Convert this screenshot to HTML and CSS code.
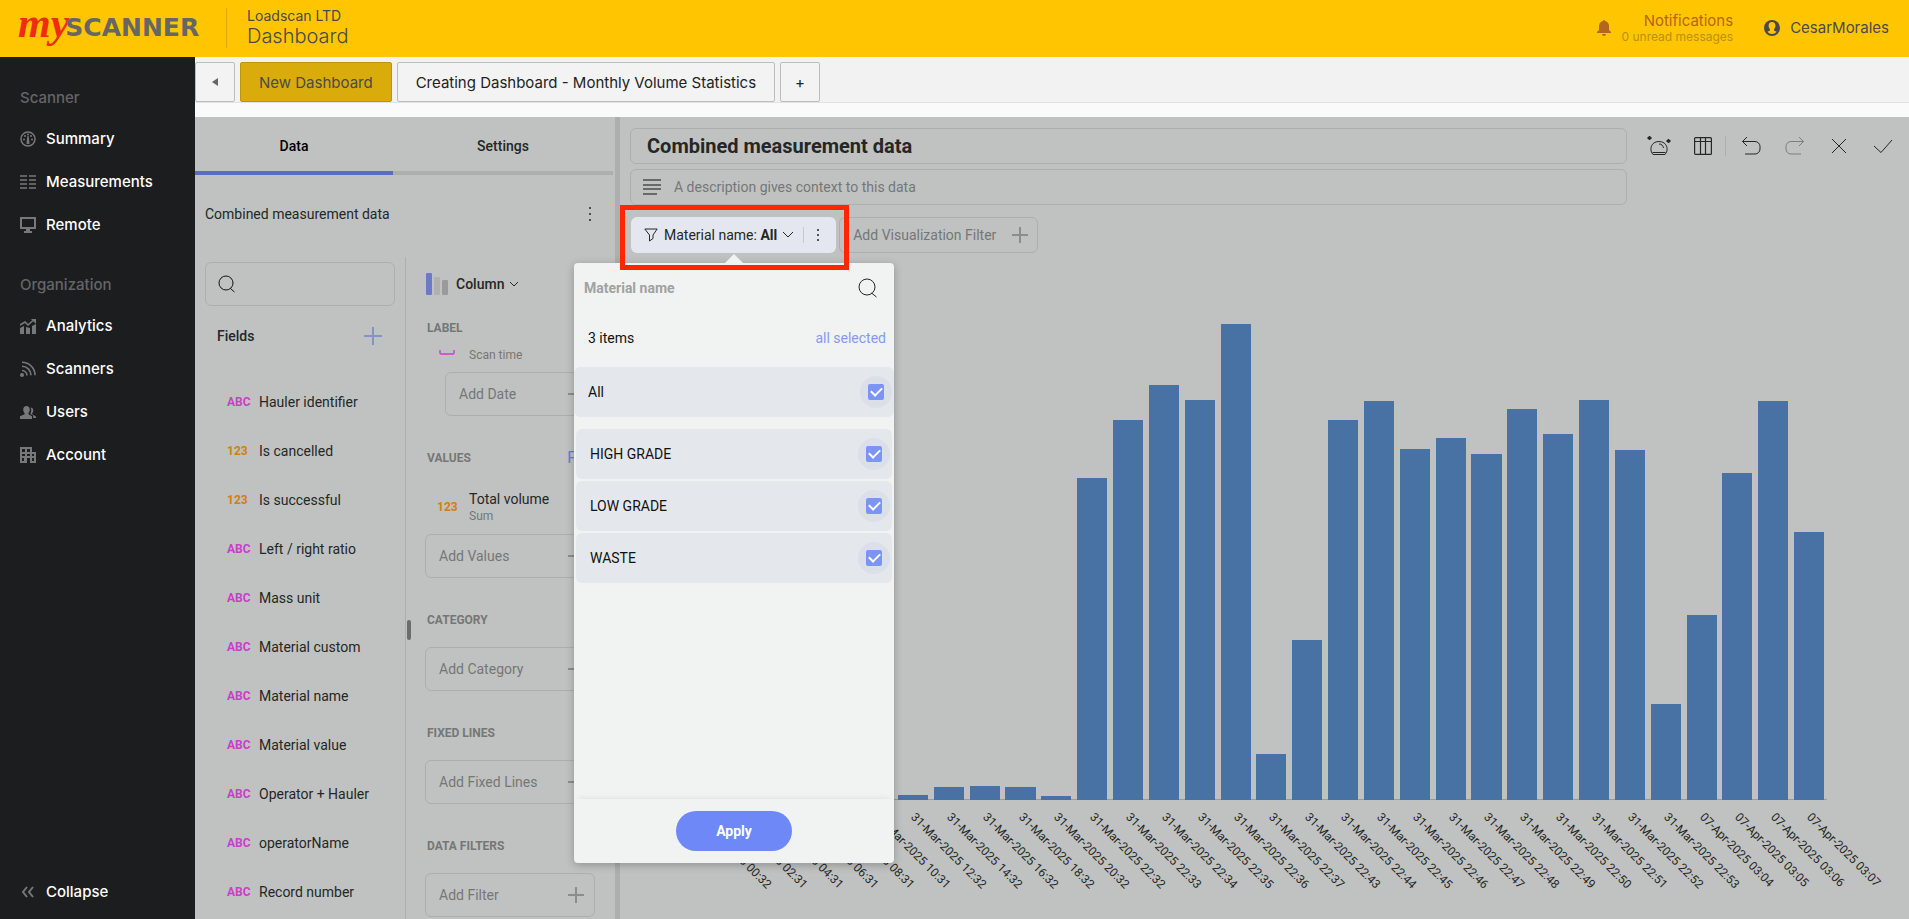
FILE: index.html
```html
<!DOCTYPE html>
<html lang="en">
<head>
    <meta charset="UTF-8">
    <meta name="viewport" content="width=device-width, initial-scale=1.0">
    <title>Loadscan LTD - Dashboard</title>
    <link rel="stylesheet" href="styles.css">
</head>
<body>
    <header class="topbar">
        <div class="logo"><span class="logo-my">my</span><span class="logo-scanner">SCANNER</span></div>
        <div class="page-name">
            <span class="company">Loadscan LTD</span>
            <h1>Dashboard</h1>
        </div>
        <a class="notifications" href="#">
            <svg width="14" height="16" viewBox="0 0 14 16" fill="currentColor"><path d="M7 0a1 1 0 0 1 1 1C11 1.500 12 4 12 6v4l2 2v1H0v-1l2-2V6c0-2 1-4.500 4-5a1 1 0 0 1 1-1zM5 14h4a2 2 0 0 1-4 0z"/></svg>
            <span class="notifications-text">
                <span>Notifications</span>
                <small>0 unread messages</small>
            </span>
        </a>
        <a class="user" href="#">
            <svg width="16" height="16" viewBox="0 0 16 16"><circle cx="8" cy="8" r="8" fill="#4a4a4a"/><path d="M8 2c2.200 0 3.400 1.500 3.400 3.600 0 1.600-.7 3-1.400 3.700v1.200l2.600 1.300A6 6 0 0 1 8 14a6 6 0 0 1-4.600-2.200L6 10.500V9.300c-.7-.7-1.400-2.100-1.400-3.700C4.600 3.500 5.800 2 8 2z" fill="#ffc600"/></svg>
            <span>CesarMorales</span>
        </a>
    </header>

    <div class="main">
        <nav class="sidebar">
            <h2>Scanner</h2>
            <a href="#">
                <svg width="16" height="16" viewBox="0 0 16 16"><circle cx="8" cy="8" r="7" fill="none" stroke="currentColor" stroke-width="1.500"/><path d="M7.400 5h1.200l.8 6a1.500 1.500 0 1 1-2.800 0z" fill="currentColor"/><g fill="currentColor"><circle cx="4" cy="8.500" r="1"/><circle cx="5" cy="5" r="1"/><circle cx="8" cy="3.500" r="1"/><circle cx="11" cy="5" r="1"/><circle cx="12" cy="8.500" r="1"/></g></svg>
                Summary
            </a>
            <a href="#">
                <svg width="16" height="16" viewBox="0 0 16 16" stroke="currentColor" stroke-width="1.600"><path d="M0 2h7M9 2h7M0 6h7M9 6h7M0 10h7M9 10h7M0 14h7M9 14h7"/></svg>
                Measurements
            </a>
            <a href="#">
                <svg width="16" height="16" viewBox="0 0 16 16"><path d="M1 1h14v10H1z" fill="none" stroke="currentColor" stroke-width="2"/><path d="M6 12h4v2h2v2H4v-2h2z" fill="currentColor"/></svg>
                Remote
            </a>
            <h2>Organization</h2>
            <a href="#">
                <svg width="16" height="16" viewBox="0 0 16 16"><path d="M0 10l4-2v8H0zM6 9l4 1v6H6zM12 8l4-2v10h-4z" fill="currentColor"/><path d="M0 7l5-3 3 3 5-4.500" fill="none" stroke="currentColor" stroke-width="1.600"/><path d="M11 1h5v5z" fill="currentColor"/></svg>
                Analytics
            </a>
            <a href="#">
                <svg width="16" height="16" viewBox="0 0 16 16" fill="none" stroke="currentColor" stroke-width="1.600"><circle cx="2" cy="14" r="2" fill="currentColor" stroke="none"/><path d="M2 9.500A5 5 0 0 1 7 14.500M2 5.300a9 9 0 0 1 9 9M2 1.200a13 13 0 0 1 13 13"/></svg>
                Scanners
            </a>
            <a href="#">
                <svg width="16" height="16" viewBox="0 0 16 16" fill="currentColor"><path d="M6.500 2c2 0 3.300 1.500 3.300 3.600 0 1.500-.6 2.900-1.400 3.700v1l3.600 2V15H0v-2.700l4.600-2v-1C3.800 8.500 3.200 7.100 3.200 5.600 3.200 3.500 4.500 2 6.500 2z"/><path d="M10.500 3.500c1.700 0 2.800 1.100 2.800 2.800 0 1.300-.5 2.300-1.200 3v1l3.900 2.200V14h-2.800v-2.400l-3-1.700c1.100-1.900 1.600-4.300.3-6.400z"/></svg>
                Users
            </a>
            <a href="#">
                <svg width="16" height="16" viewBox="0 0 16 16" fill="currentColor" fill-rule="evenodd"><path d="M0 0h12v5h4v11H0zM2 2v3h3V2zM7 2v3h3V2zM2 7v2h3V7zM7 7v2h3V7zM12 7v2h2V7zM2 11v3h2v-3zM7 11v5h3v-5zM12 11v3h2v-3z"/></svg>
                Account
            </a>
            <a class="collapse" href="#">
                <svg width="16" height="16" viewBox="0 0 16 16" fill="none" stroke="currentColor" stroke-width="2"><path d="M7 3L3 8l4 5M13 3L9 8l4 5"/></svg>
                Collapse
            </a>
        </nav>

        <div class="content">
            <div class="dashboard-tabs">
                <button class="tab tab-small" aria-label="Previous"><svg width="6" height="8" viewBox="0 0 6 8"><path d="M6 0v8L0 4z" fill="#666"/></svg></button>
                <button class="tab tab-active">New Dashboard</button>
                <button class="tab">Creating Dashboard - Monthly Volume Statistics</button>
                <button class="tab tab-small tab-add">+</button>
            </div>

            <div class="workspace">
                <section class="data-panel">
                    <div class="panel-tabs">
                        <button class="active">Data</button>
                        <button>Settings</button>
                    </div>
                    <div class="source">
                        <span>Combined measurement data</span>
                        <button class="dots" aria-label="Source options"><svg width="4" height="16" viewBox="0 0 4 16" fill="#252726"><circle cx="2" cy="2" r="1"/><circle cx="2" cy="8" r="1"/><circle cx="2" cy="14" r="1"/></svg></button>
                    </div>
                    <div class="builder">
                        <div class="fields">
                            <label class="search">
                                <svg width="18" height="18" viewBox="0 0 18 18" fill="none" stroke="#111"><circle cx="8" cy="8" r="7"/><path d="M12.500 13.500l4 3.500"/></svg>
                                <input type="text" aria-label="Search fields">
                            </label>
                            <div class="fields-head">
                                <h3>Fields</h3>
                                <button aria-label="Add field"><svg width="18" height="18" viewBox="0 0 18 18" stroke="#8494c6" stroke-width="2"><path d="M9 0v18M0 9h18"/></svg></button>
                            </div>
                            <ul>
                                <li><b class="abc">ABC</b>Hauler identifier</li>
                                <li><b class="num">123</b>Is cancelled</li>
                                <li><b class="num">123</b>Is successful</li>
                                <li><b class="abc">ABC</b>Left / right ratio</li>
                                <li><b class="abc">ABC</b>Mass unit</li>
                                <li><b class="abc">ABC</b>Material custom</li>
                                <li><b class="abc">ABC</b>Material name</li>
                                <li><b class="abc">ABC</b>Material value</li>
                                <li><b class="abc">ABC</b>Operator + Hauler</li>
                                <li><b class="abc">ABC</b>operatorName</li>
                                <li><b class="abc">ABC</b>Record number</li>
                            </ul>
                        </div>

                        <div class="config">
                            <span class="resizer"></span>
                            <button class="chart-type">
                                <svg width="22" height="22" viewBox="0 0 22 22"><rect width="6" height="22" rx="1" fill="#6a7bc4"/><rect x="8" y="4" width="6" height="18" rx="1" fill="#b0b0b0"/><rect x="16" y="7" width="6" height="15" rx="1" fill="#9a9a9a"/></svg>
                                Column
                                <svg class="chevron" width="10" height="6" viewBox="0 0 10 6" fill="none" stroke="#252726"><path d="M1 1l4 4 4-4"/></svg>
                            </button>
                            <h4>LABEL</h4>
                            <div class="date-item">
                                <svg width="16" height="16" viewBox="0 0 16 16" fill="none" stroke="#c93fc9" stroke-width="1.400"><rect x="1" y="1" width="14" height="14" rx="1"/></svg>
                                <span>Scan time</span>
                            </div>
                            <button class="drop drop-date">Add Date <i class="plus"></i></button>
                            <div class="title-row"><h4>VALUES</h4><a href="#">F(x)</a></div>
                            <div class="value-item">
                                <b class="num">123</b>
                                <div><p>Total volume</p><small>Sum</small></div>
                            </div>
                            <button class="drop">Add Values <i class="plus"></i></button>
                            <h4 class="spaced">CATEGORY</h4>
                            <button class="drop">Add Category <i class="plus"></i></button>
                            <h4 class="spaced">FIXED LINES</h4>
                            <button class="drop">Add Fixed Lines <i class="plus"></i></button>
                            <h4 class="spaced">DATA FILTERS</h4>
                            <button class="drop">Add Filter <i class="plus"></i></button>
                        </div>
                    </div>
                </section>

                <section class="visual">
                    <div class="visual-head">
                        <div class="inputs">
                            <input class="title-input" type="text" value="Combined measurement data" aria-label="Title">
                            <label class="description">
                                <svg width="18" height="16" viewBox="0 0 18 16" stroke="#111" stroke-width="1.200"><path d="M0 1h18M0 6h18M0 10h18M0 15h14"/></svg>
                                <input type="text" placeholder="A description gives context to this data" aria-label="Description">
                            </label>
                        </div>
                        <div class="tools">
                            <button aria-label="Insights"><svg width="24" height="20" viewBox="0 0 24 20" fill="none" stroke="#252726"><path d="M6 18.500c-4-4-2.500-13 6-13s10 9 6 13zM5.500 16.500h13M12 8c2.500 0 4 1.500 4.500 4"/><path d="M2.500 0v4M.5 2h4M21.500 3v4M19.500 5h4" stroke-width="1.800"/></svg></button>
                            <button aria-label="Show grid"><svg width="18" height="18" viewBox="0 0 18 18" fill="none" stroke="#252726" stroke-width="1.200"><rect x=".6" y=".6" width="16.800" height="16.800" rx="1"/><path d="M.5 4.500h17M6.500 1v16M11.500 1v16"/></svg></button>
                            <span class="tools-divider"></span>
                            <button aria-label="Undo"><svg width="20" height="20" viewBox="0 0 20 20" fill="none" stroke="#252726"><path d="M6 1L1.500 5.500 6 10M1.500 5.500H14a5 5 0 0 1 5 5V13a5 5 0 0 1-5 5H4"/></svg></button>
                            <button aria-label="Redo"><svg width="20" height="20" viewBox="0 0 20 20" fill="none" stroke="#7c7e7d"><path d="M14 1l4.500 4.500L14 10M18.500 5.500H6a5 5 0 0 0-5 5V13a5 5 0 0 0 5 5h10"/></svg></button>
                            <button aria-label="Cancel"><svg width="20" height="20" viewBox="0 0 20 20" fill="none" stroke="#252726"><path d="M3 3l14 14M17 3L3 17"/></svg></button>
                            <button aria-label="Save"><svg width="20" height="20" viewBox="0 0 20 20" fill="none" stroke="#252726"><path d="M1 10l7 6.500L19 4"/></svg></button>
                        </div>
                    </div>

                    <div class="filters">
                        <div class="chip-wrap">
                            <div class="chip">
                                <button class="chip-main">
                                    <svg width="14" height="14" viewBox="0 0 14 14" fill="none" stroke="#252726"><path d="M.8 1h12.400L9 7v3.500L5.500 13V7z"/></svg>
                                    <span>Material name: <b>All</b></span>
                                    <svg width="10" height="6" viewBox="0 0 10 6" fill="none" stroke="#252726"><path d="M0 0l5 5 5-5"/></svg>
                                </button>
                                <button class="chip-dots" aria-label="Filter options"><svg width="4" height="14" viewBox="0 0 4 14" fill="#252726"><circle cx="2" cy="2" r="1"/><circle cx="2" cy="7" r="1"/><circle cx="2" cy="12" r="1"/></svg></button>
                            </div>
                            <div class="popover">
                                <div class="popover-head">
                                    <h3>Material name</h3>
                                    <button aria-label="Search items"><svg width="20" height="20" viewBox="0 0 20 20" fill="none" stroke="#252726"><circle cx="9" cy="9" r="8"/><path d="M13.500 15l5 4"/></svg></button>
                                </div>
                                <div class="popover-count"><span>3 items</span><a href="#">all selected</a></div>
                                <label class="option option-all">All <span class="check"><input type="checkbox" checked></span></label>
                                <div class="option-list">
                                    <label class="option">HIGH GRADE <span class="check"><input type="checkbox" checked></span></label>
                                    <label class="option">LOW GRADE <span class="check"><input type="checkbox" checked></span></label>
                                    <label class="option">WASTE <span class="check"><input type="checkbox" checked></span></label>
                                </div>
                                <div class="popover-foot"><button class="apply">Apply</button></div>
                            </div>
                            <div class="highlight"></div>
                        </div>
                        <button class="add-filter">Add Visualization Filter <i class="plus"></i></button>
                    </div>

                    <div class="chart" id="chart"></div>
                </section>
            </div>
        </div>
    </div>

    <script>
        // label, bar height in percent of the plot area
        const data = [
            ['31-Mar-2025 00:32', 1], ['31-Mar-2025 02:31', 1], ['31-Mar-2025 04:31', 2],
            ['31-Mar-2025 06:31', 2], ['31-Mar-2025 08:31', 2], ['31-Mar-2025 10:31', 2],
            ['31-Mar-2025 12:32', 0.9], ['31-Mar-2025 14:32', 2.3], ['31-Mar-2025 16:32', 2.5],
            ['31-Mar-2025 18:32', 2.3], ['31-Mar-2025 20:32', 0.8], ['31-Mar-2025 22:32', 58.9],
            ['31-Mar-2025 22:33', 69.6], ['31-Mar-2025 22:34', 76.1], ['31-Mar-2025 22:35', 73.3],
            ['31-Mar-2025 22:36', 87.1], ['31-Mar-2025 22:37', 8.4], ['31-Mar-2025 22:43', 29.3],
            ['31-Mar-2025 22:44', 69.6], ['31-Mar-2025 22:45', 73.1], ['31-Mar-2025 22:46', 64.2],
            ['31-Mar-2025 22:47', 66.3], ['31-Mar-2025 22:48', 63.4], ['31-Mar-2025 22:49', 71.6],
            ['31-Mar-2025 22:50', 67], ['31-Mar-2025 22:51', 73.3], ['31-Mar-2025 22:52', 64.1],
            ['31-Mar-2025 22:53', 17.6], ['07-Apr-2025 03:04', 33.9], ['07-Apr-2025 03:05', 59.9],
            ['07-Apr-2025 03:06', 73.1], ['07-Apr-2025 03:07', 49.1]
        ];

        const chart = document.getElementById('chart');
        data.forEach(([label, value]) => {
            const slot = document.createElement('div');
            slot.className = 'slot';
            slot.innerHTML = `<div class="plot"><div class="bar" style="height: ${value}%"></div></div>
                <div class="tick"><span>${label}</span></div>`;
            chart.appendChild(slot);
        });
    </script>
</body>
</html>
```

FILE: styles.css
```css
:root {
    --yellow: #ffc600;
    --dark: #1c1d1f;
    --panel: #c0c2c1;
    --line: #adafae;
    --text: #252726;
    --muted: #757776;
    --blue: #6e88f8;
    --bar: #4871a4;
}

* {
    margin: 0;
    padding: 0;
    box-sizing: border-box;
}

body {
    display: flex;
    flex-direction: column;
    height: 100vh;
    overflow: hidden;
    font-family: Roboto, sans-serif;
    font-size: 14px;
    color: var(--text);
}

button, input {
    font: inherit;
    color: inherit;
    background: none;
    border: none;
    outline: none;
}

button {
    display: flex;
    align-items: center;
    cursor: pointer;
}

a {
    text-decoration: none;
    color: inherit;
}

svg {
    display: block;
    flex: none;
}

/* Top bar */
.topbar {
    display: flex;
    align-items: center;
    height: 57px;
    flex: none;
    padding: 0 20px 2px 18px;
    background: var(--yellow);
    color: #4a4a4a;
    font-family: Inter, sans-serif;
}

.logo {
    display: flex;
    align-items: center;
    width: 209px;
    height: 40px;
    border-right: 1px solid #deac00;
}

.logo-my {
    font: italic bold 42px/40px "Liberation Serif", serif;
    color: #ef2b10;
    margin: -10px -4px 0 0;
}

.logo-scanner {
    font: bold 25px/40px "DejaVu Sans", sans-serif;
    color: #666;
}

.page-name {
    padding-left: 20px;
    flex: 1;
}

.company {
    display: block;
    font-size: 14px;
    line-height: 16px;
}

.page-name h1 {
    font-size: 20px;
    font-weight: 300;
    line-height: 24px;
}

.notifications {
    display: flex;
    align-items: center;
    gap: 11px;
    color: #b5651d;
}

.notifications-text {
    display: flex;
    flex-direction: column;
    align-items: flex-end;
    font-size: 15px;
    line-height: 17px;
}

.notifications-text small {
    font-size: 12px;
    line-height: 15px;
    color: #b9901a;
}

.user {
    display: flex;
    align-items: center;
    gap: 10px;
    margin-left: 31px;
    font-size: 15px;
}

/* Sidebar */
.main {
    display: flex;
    flex: 1;
    min-height: 0;
}

.sidebar {
    display: flex;
    flex-direction: column;
    width: 195px;
    flex: none;
    padding: 22px 0 6px 20px;
    background: var(--dark);
    color: #fff;
    font: 500 15px Inter, sans-serif;
}

.sidebar h2 {
    font-size: 15px;
    font-weight: 500;
    line-height: 38px;
    color: #646567;
}

.sidebar a {
    display: flex;
    align-items: center;
    gap: 10px;
    height: 43px;
}

.sidebar a + h2 {
    margin-top: 20px;
}

.sidebar svg {
    color: #77787a;
}

.sidebar .collapse {
    margin-top: auto;
}

.content {
    display: flex;
    flex-direction: column;
    flex: 1;
    min-width: 0;
    background: #fafafa;
}

/* Dashboard tabs */
.dashboard-tabs {
    display: flex;
    gap: 5px;
    flex: none;
    height: 46px;
    padding-top: 5px;
    margin-bottom: 14px;
    background: #f2f2f2;
    border-bottom: 1px solid #e2e2e2;
    font: 15px Inter, sans-serif;
}

.tab {
    height: 40px;
    padding: 0 18px;
    background: #f3f3f3;
    border: 1px solid #bdbdbd;
    border-radius: 2px;
    color: #222;
}

.tab-active {
    background: #d9ac0c;
    border-color: #bd9508;
    color: #4a4a4a;
}

.tab-small {
    justify-content: center;
    width: 40px;
    padding: 0;
}

/* Workspace */
.workspace {
    display: flex;
    flex: 1;
    min-height: 0;
    background: var(--panel);
}

.data-panel {
    display: flex;
    flex-direction: column;
    width: 425px;
    flex: none;
    border-right: 5px solid var(--line);
}

.panel-tabs {
    display: grid;
    grid-template-columns: 198px 1fr;
    padding-right: 2px;
}

.panel-tabs button {
    justify-content: center;
    height: 58px;
    padding-top: 4px;
    border-bottom: 4px solid var(--line);
    font-weight: 500;
}

.panel-tabs .active {
    border-color: #5a6cc4;
    color: #000;
}

.source {
    display: flex;
    align-items: center;
    justify-content: space-between;
    height: 82px;
    padding: 0 23px 4px 10px;
}

.builder {
    display: flex;
    flex: 1;
    min-height: 0;
}

.fields {
    width: 211px;
    padding: 5px 10px 0;
    border-right: 1px solid var(--line);
    overflow: hidden;
}

.search {
    display: flex;
    align-items: center;
    gap: 8px;
    height: 44px;
    padding: 0 12px;
    border: 1px solid var(--line);
    border-radius: 6px;
}

.search input {
    width: 100%;
    min-width: 0;
}

.fields-head {
    display: flex;
    align-items: center;
    justify-content: space-between;
    height: 60px;
    padding: 0 13px 0 12px;
}

.fields-head h3 {
    font-size: 14px;
    font-weight: 500;
}

.fields ul {
    list-style: none;
    margin-top: 11px;
}

.fields li {
    display: flex;
    align-items: center;
    height: 49px;
    padding-left: 22px;
    white-space: nowrap;
}

.abc, .num {
    width: 32px;
    flex: none;
    font-size: 12px;
    font-weight: 700;
}

.abc {
    color: #c93fc9;
}

.num {
    color: #cf8010;
}

/* Chart configuration column */
.config {
    position: relative;
    flex: 1;
    min-width: 0;
    padding: 0 20px 0 19px;
    overflow: hidden;
}

.resizer {
    position: absolute;
    left: 1px;
    top: 363px;
    width: 4px;
    height: 20px;
    border-radius: 2px;
    background: #6b6d6c;
}

.chart-type {
    gap: 8px;
    height: 54px;
    padding-left: 1px;
    font-weight: 500;
}

.chart-type .chevron {
    margin-left: -3px;
}

.config h4 {
    padding-left: 2px;
    font-size: 12px;
    font-weight: 700;
    line-height: 34px;
    color: var(--muted);
}

.config .spaced {
    margin: 25px 0 10px;
}

.date-item {
    display: flex;
    align-items: flex-end;
    gap: 14px;
    height: 22px;
    margin-top: 5px;
    padding: 0 0 9px 14px;
    /* the icon runs up under the section title */
    clip-path: inset(0);
    color: var(--muted);
    font-size: 12px;
    line-height: 16px;
}

.date-item svg {
    margin-bottom: 8px;
}

.drop {
    justify-content: space-between;
    width: 100%;
    height: 44px;
    padding: 0 10px 1px 13px;
    border: 1px solid var(--line);
    border-radius: 6px;
    color: var(--muted);
}

.drop-date {
    width: auto;
    min-width: 150px;
    margin-left: 20px;
}

.plus {
    width: 16px;
    height: 16px;
    background:
        linear-gradient(#8b8d8c, #8b8d8c) center / 16px 2px no-repeat,
        linear-gradient(#8b8d8c, #8b8d8c) center / 2px 16px no-repeat;
}

.title-row {
    display: flex;
    align-items: center;
    justify-content: space-between;
    margin-top: 25px;
}

.title-row a {
    color: #6a7bd0;
    font-size: 16px;
    line-height: 34px;
}

.value-item {
    display: flex;
    align-items: center;
    height: 59px;
    padding: 5px 0 0 12px;
}

.value-item p {
    line-height: 18px;
}

.value-item small {
    display: block;
    font-size: 12px;
    line-height: 16px;
    color: var(--muted);
}

/* Visualization */
.visual {
    display: flex;
    flex-direction: column;
    flex: 1;
    min-width: 0;
    padding: 11px 0 0 10px;
}

.visual-head {
    display: grid;
    grid-template-columns: 1fr 282px;
}

.inputs {
    display: flex;
    flex-direction: column;
    gap: 5px;
}

.title-input, .description {
    height: 36px;
    border: 1px solid var(--line);
    border-radius: 6px;
}

.title-input {
    padding: 0 16px;
    font-size: 20px;
    font-weight: 700;
}

.description {
    display: flex;
    align-items: center;
    gap: 13px;
    padding: 0 12px;
}

.description input {
    flex: 1;
}

.description input::placeholder {
    color: var(--muted);
    opacity: 1;
}

.tools {
    display: flex;
    align-items: center;
    height: 36px;
    padding-left: 10px;
}

.tools button {
    justify-content: center;
    width: 44px;
    height: 36px;
}

.tools-divider {
    width: 1px;
    height: 20px;
    margin-right: 3px;
    background: var(--line);
}

.filters {
    display: flex;
    gap: 3px;
    margin-top: 12px;
    padding-left: 1px;
}

.chip-wrap {
    position: relative;
}

.chip {
    display: flex;
    align-items: center;
    height: 36px;
    padding: 0 16px 0 13px;
    border-radius: 6px;
    background: #e4e7f0;
}

.chip-main {
    gap: 6px;
    padding-right: 10px;
    border-right: 1px solid #c6c8cc;
    white-space: nowrap;
}

.chip-dots {
    padding-left: 12px;
}

.add-filter {
    gap: 16px;
    height: 36px;
    padding: 0 9px 1px 13px;
    border: 1px solid var(--line);
    border-radius: 6px;
    color: var(--muted);
}

.highlight {
    position: absolute;
    z-index: 3;
    top: -12px;
    left: -11px;
    width: 229px;
    height: 65px;
    border: 5px solid #ff2600;
    pointer-events: none;
}

/* Filter popover */
.popover {
    position: absolute;
    z-index: 2;
    top: 46px;
    left: -57px;
    display: flex;
    flex-direction: column;
    width: 320px;
    height: 600px;
    border-radius: 4px;
    background: #f0f3f2;
    box-shadow: 0 2px 8px rgba(0, 0, 0, 0.25);
    color: #111;
}

.popover::before {
    content: "";
    position: absolute;
    top: -9px;
    left: 151px;
    border: 9px solid transparent;
    border-top: 0;
    border-bottom-color: #f0f3f2;
}

.popover-head {
    display: flex;
    align-items: center;
    justify-content: space-between;
    height: 50px;
    padding: 0 16px 0 10px;
}

.popover-head h3 {
    font-size: 14px;
    font-weight: 700;
    color: #a0a2a1;
}

.popover-count {
    display: flex;
    align-items: center;
    justify-content: space-between;
    height: 50px;
    margin-bottom: 4px;
    padding: 0 8px 0 14px;
}

.popover-count a {
    color: #8399f7;
}

.option {
    display: flex;
    align-items: center;
    justify-content: space-between;
    height: 50px;
    padding: 0 2px 0 14px;
    border-radius: 6px;
    background: #e4e8ec;
    cursor: pointer;
}

.option-list {
    display: flex;
    flex-direction: column;
    gap: 2px;
    flex: 1;
    padding: 12px 2px 0;
}

.check {
    display: grid;
    place-items: center;
    width: 32px;
    height: 32px;
    border-radius: 50%;
    background: #dbdfe8;
}

.check input {
    display: grid;
    place-items: center;
    width: 16px;
    height: 16px;
    border-radius: 2px;
    background: #7b94f6;
    appearance: none;
}

.check input:checked::before {
    content: "";
    width: 9px;
    height: 5px;
    margin-bottom: 3px;
    border: solid #fff;
    border-width: 0 0 2px 2px;
    transform: rotate(-45deg);
}

.popover-foot {
    display: flex;
    justify-content: center;
    padding: 12px;
    border-radius: 0 0 4px 4px;
    box-shadow: 0 -4px 6px -4px rgba(0, 0, 0, 0.1);
}

.apply {
    justify-content: center;
    width: 116px;
    height: 40px;
    border-radius: 20px;
    background: var(--blue);
    color: #fff;
    font-weight: 700;
}

/* Column chart */
.chart {
    display: flex;
    flex: 1;
    min-height: 0;
    padding: 0 82px 0 50px;
}

.slot {
    display: flex;
    flex-direction: column;
    flex: 1;
    min-width: 0;
}

.plot {
    display: flex;
    align-items: flex-end;
    justify-content: center;
    flex: 1;
    border-bottom: 1px solid #999b9a;
}

.bar {
    width: 84%;
    margin-bottom: -1px;
    background: var(--bar);
}

.tick {
    height: 119px;
    padding: 8px 0 0 50%;
    font-size: 12px;
    line-height: 14px;
}

.tick span {
    display: block;
    width: max-content;
    transform: rotate(45deg);
    transform-origin: 0 50%;
}
```
